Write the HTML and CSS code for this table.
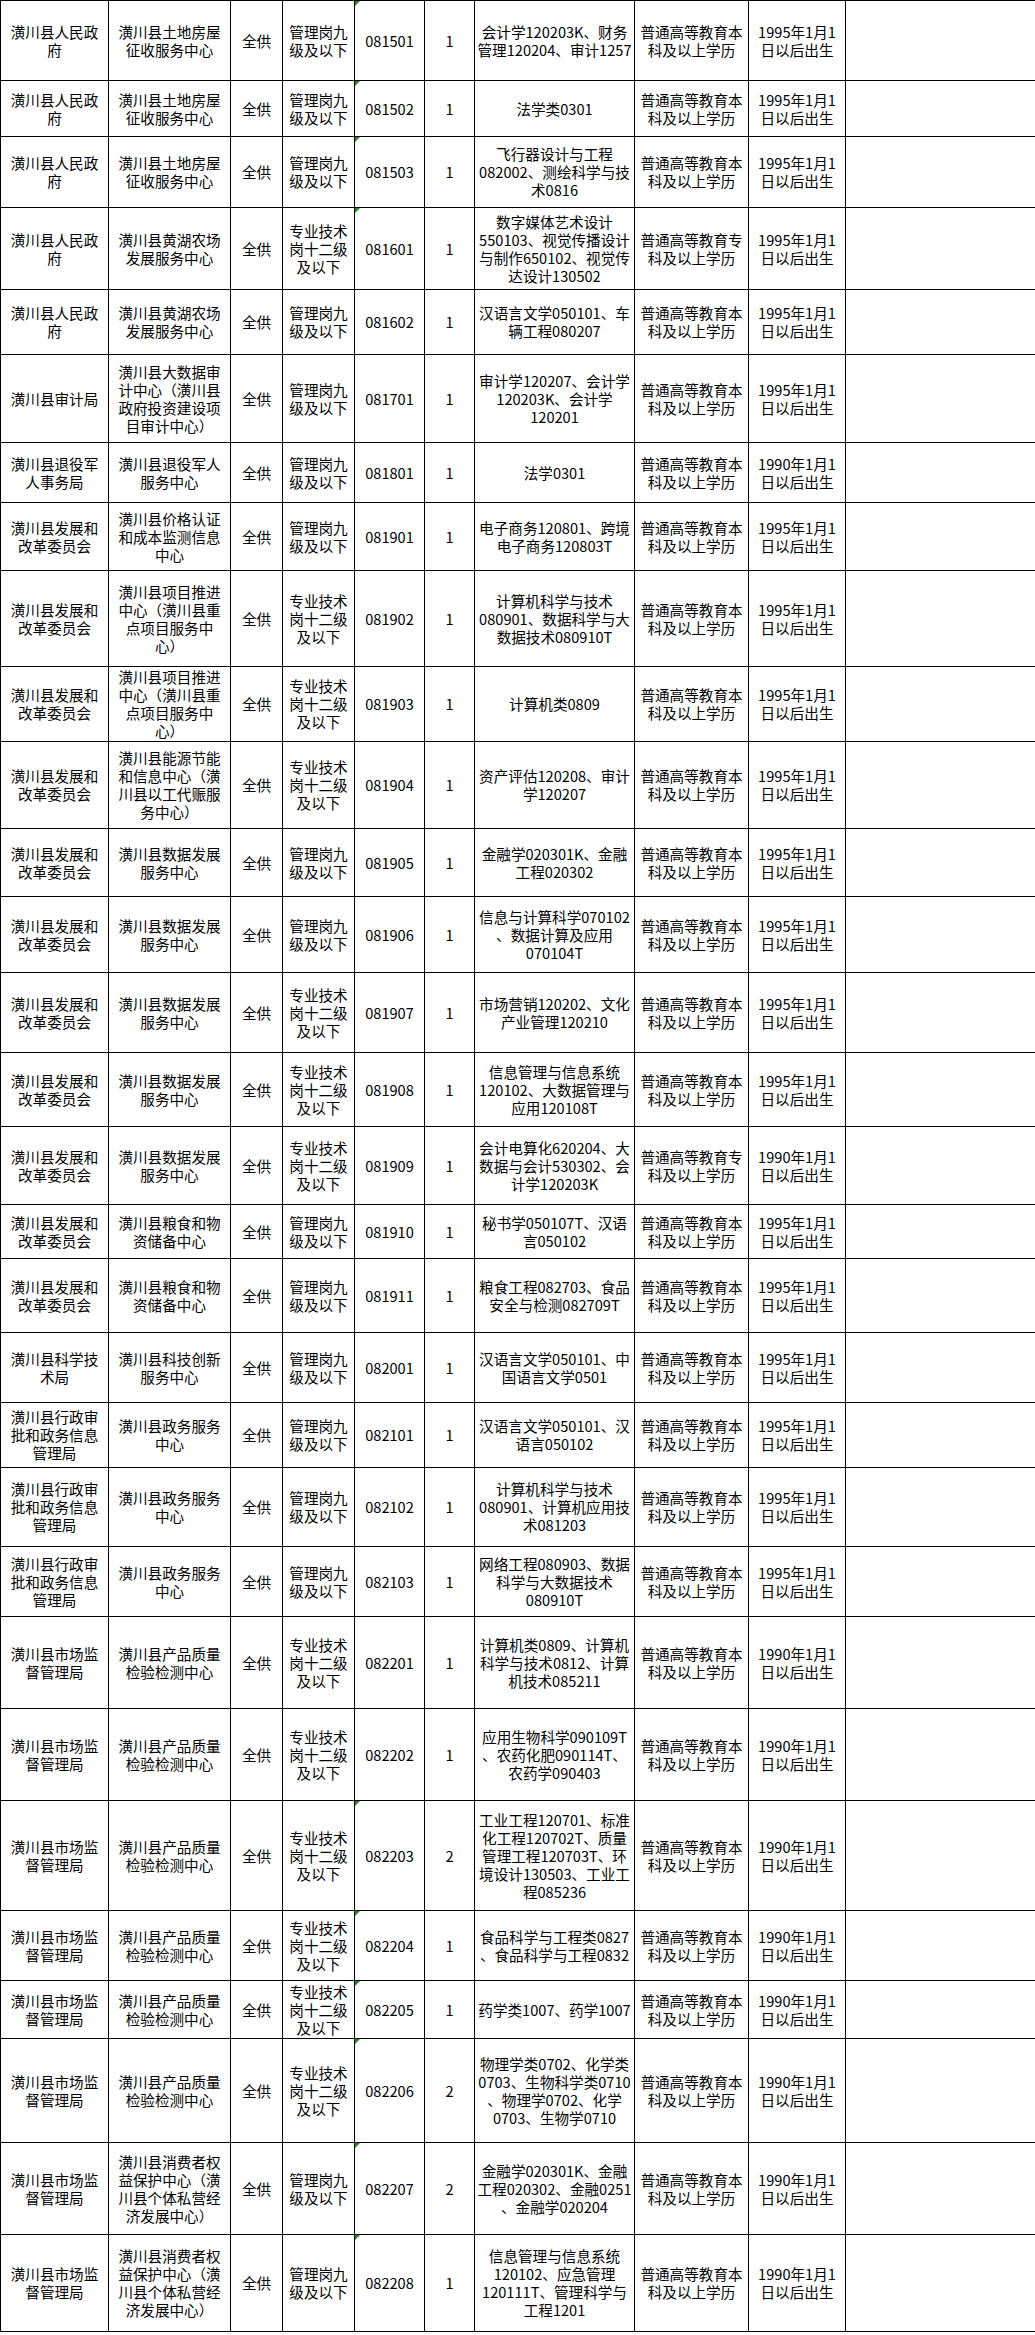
FILE: index.html
```html
<!DOCTYPE html>
<html lang="zh-CN">
<head>
<meta charset="utf-8">
<title>岗位表</title>
<link rel="stylesheet" href="styles.css">
</head>
<body>
<table class="sheet">
<colgroup>
<col class="c-dept"><col class="c-unit"><col class="c-fund"><col class="c-post"><col class="c-code"><col class="c-num"><col class="c-major"><col class="c-edu"><col class="c-age"><col class="c-note">
</colgroup>
<tbody>
<tr style="height:80px"><td>潢川县人民政<br>府</td><td>潢川县土地房屋<br>征收服务中心</td><td>全供</td><td>管理岗九<br>级及以下</td><td class="code flag">081501</td><td>1</td><td>会计学120203K、财务<br>管理120204、审计1257</td><td>普通高等教育本<br>科及以上学历</td><td>1995年1月1<br>日以后出生</td><td></td></tr>
<tr style="height:56px"><td>潢川县人民政<br>府</td><td>潢川县土地房屋<br>征收服务中心</td><td>全供</td><td>管理岗九<br>级及以下</td><td class="code flag">081502</td><td>1</td><td>法学类0301</td><td>普通高等教育本<br>科及以上学历</td><td>1995年1月1<br>日以后出生</td><td></td></tr>
<tr style="height:71px"><td>潢川县人民政<br>府</td><td>潢川县土地房屋<br>征收服务中心</td><td>全供</td><td>管理岗九<br>级及以下</td><td class="code flag">081503</td><td>1</td><td>飞行器设计与工程<br>082002、测绘科学与技<br>术0816</td><td>普通高等教育本<br>科及以上学历</td><td>1995年1月1<br>日以后出生</td><td></td></tr>
<tr style="height:82px"><td>潢川县人民政<br>府</td><td>潢川县黄湖农场<br>发展服务中心</td><td>全供</td><td>专业技术<br>岗十二级<br>及以下</td><td class="code flag">081601</td><td>1</td><td>数字媒体艺术设计<br>550103、视觉传播设计<br>与制作650102、视觉传<br>达设计130502</td><td>普通高等教育专<br>科及以上学历</td><td>1995年1月1<br>日以后出生</td><td></td></tr>
<tr style="height:65px"><td>潢川县人民政<br>府</td><td>潢川县黄湖农场<br>发展服务中心</td><td>全供</td><td>管理岗九<br>级及以下</td><td class="code">081602</td><td>1</td><td>汉语言文学050101、车<br>辆工程080207</td><td>普通高等教育本<br>科及以上学历</td><td>1995年1月1<br>日以后出生</td><td></td></tr>
<tr style="height:88px"><td>潢川县审计局</td><td>潢川县大数据审<br>计中心（潢川县<br>政府投资建设项<br>目审计中心）</td><td>全供</td><td>管理岗九<br>级及以下</td><td class="code">081701</td><td>1</td><td>审计学120207、会计学<br>120203K、会计学<br>120201</td><td>普通高等教育本<br>科及以上学历</td><td>1995年1月1<br>日以后出生</td><td></td></tr>
<tr style="height:60px"><td>潢川县退役军<br>人事务局</td><td>潢川县退役军人<br>服务中心</td><td>全供</td><td>管理岗九<br>级及以下</td><td class="code">081801</td><td>1</td><td>法学0301</td><td>普通高等教育本<br>科及以上学历</td><td>1990年1月1<br>日以后出生</td><td></td></tr>
<tr style="height:68px"><td>潢川县发展和<br>改革委员会</td><td>潢川县价格认证<br>和成本监测信息<br>中心</td><td>全供</td><td>管理岗九<br>级及以下</td><td class="code">081901</td><td>1</td><td>电子商务120801、跨境<br>电子商务120803T</td><td>普通高等教育本<br>科及以上学历</td><td>1995年1月1<br>日以后出生</td><td></td></tr>
<tr style="height:96px"><td>潢川县发展和<br>改革委员会</td><td>潢川县项目推进<br>中心（潢川县重<br>点项目服务中<br>心）</td><td>全供</td><td>专业技术<br>岗十二级<br>及以下</td><td class="code">081902</td><td>1</td><td>计算机科学与技术<br>080901、数据科学与大<br>数据技术080910T</td><td>普通高等教育本<br>科及以上学历</td><td>1995年1月1<br>日以后出生</td><td></td></tr>
<tr style="height:75px"><td>潢川县发展和<br>改革委员会</td><td>潢川县项目推进<br>中心（潢川县重<br>点项目服务中<br>心）</td><td>全供</td><td>专业技术<br>岗十二级<br>及以下</td><td class="code">081903</td><td>1</td><td>计算机类0809</td><td>普通高等教育本<br>科及以上学历</td><td>1995年1月1<br>日以后出生</td><td></td></tr>
<tr style="height:87px"><td>潢川县发展和<br>改革委员会</td><td>潢川县能源节能<br>和信息中心（潢<br>川县以工代赈服<br>务中心）</td><td>全供</td><td>专业技术<br>岗十二级<br>及以下</td><td class="code">081904</td><td>1</td><td>资产评估120208、审计<br>学120207</td><td>普通高等教育本<br>科及以上学历</td><td>1995年1月1<br>日以后出生</td><td></td></tr>
<tr style="height:68px"><td>潢川县发展和<br>改革委员会</td><td>潢川县数据发展<br>服务中心</td><td>全供</td><td>管理岗九<br>级及以下</td><td class="code">081905</td><td>1</td><td>金融学020301K、金融<br>工程020302</td><td>普通高等教育本<br>科及以上学历</td><td>1995年1月1<br>日以后出生</td><td></td></tr>
<tr style="height:76px"><td>潢川县发展和<br>改革委员会</td><td>潢川县数据发展<br>服务中心</td><td>全供</td><td>管理岗九<br>级及以下</td><td class="code">081906</td><td>1</td><td>信息与计算科学070102<br>、数据计算及应用<br>070104T</td><td>普通高等教育本<br>科及以上学历</td><td>1995年1月1<br>日以后出生</td><td></td></tr>
<tr style="height:80px"><td>潢川县发展和<br>改革委员会</td><td>潢川县数据发展<br>服务中心</td><td>全供</td><td>专业技术<br>岗十二级<br>及以下</td><td class="code">081907</td><td>1</td><td>市场营销120202、文化<br>产业管理120210</td><td>普通高等教育本<br>科及以上学历</td><td>1995年1月1<br>日以后出生</td><td></td></tr>
<tr style="height:74px"><td>潢川县发展和<br>改革委员会</td><td>潢川县数据发展<br>服务中心</td><td>全供</td><td>专业技术<br>岗十二级<br>及以下</td><td class="code">081908</td><td>1</td><td>信息管理与信息系统<br>120102、大数据管理与<br>应用120108T</td><td>普通高等教育本<br>科及以上学历</td><td>1995年1月1<br>日以后出生</td><td></td></tr>
<tr style="height:78px"><td>潢川县发展和<br>改革委员会</td><td>潢川县数据发展<br>服务中心</td><td>全供</td><td>专业技术<br>岗十二级<br>及以下</td><td class="code">081909</td><td>1</td><td>会计电算化620204、大<br>数据与会计530302、会<br>计学120203K</td><td>普通高等教育专<br>科及以上学历</td><td>1990年1月1<br>日以后出生</td><td></td></tr>
<tr style="height:54px"><td>潢川县发展和<br>改革委员会</td><td>潢川县粮食和物<br>资储备中心</td><td>全供</td><td>管理岗九<br>级及以下</td><td class="code">081910</td><td>1</td><td>秘书学050107T、汉语<br>言050102</td><td>普通高等教育本<br>科及以上学历</td><td>1995年1月1<br>日以后出生</td><td></td></tr>
<tr style="height:74px"><td>潢川县发展和<br>改革委员会</td><td>潢川县粮食和物<br>资储备中心</td><td>全供</td><td>管理岗九<br>级及以下</td><td class="code">081911</td><td>1</td><td>粮食工程082703、食品<br>安全与检测082709T</td><td>普通高等教育本<br>科及以上学历</td><td>1995年1月1<br>日以后出生</td><td></td></tr>
<tr style="height:70px"><td>潢川县科学技<br>术局</td><td>潢川县科技创新<br>服务中心</td><td>全供</td><td>管理岗九<br>级及以下</td><td class="code">082001</td><td>1</td><td>汉语言文学050101、中<br>国语言文学0501</td><td>普通高等教育本<br>科及以上学历</td><td>1995年1月1<br>日以后出生</td><td></td></tr>
<tr style="height:65px"><td>潢川县行政审<br>批和政务信息<br>管理局</td><td>潢川县政务服务<br>中心</td><td>全供</td><td>管理岗九<br>级及以下</td><td class="code">082101</td><td>1</td><td>汉语言文学050101、汉<br>语言050102</td><td>普通高等教育本<br>科及以上学历</td><td>1995年1月1<br>日以后出生</td><td></td></tr>
<tr style="height:79px"><td>潢川县行政审<br>批和政务信息<br>管理局</td><td>潢川县政务服务<br>中心</td><td>全供</td><td>管理岗九<br>级及以下</td><td class="code">082102</td><td>1</td><td>计算机科学与技术<br>080901、计算机应用技<br>术081203</td><td>普通高等教育本<br>科及以上学历</td><td>1995年1月1<br>日以后出生</td><td></td></tr>
<tr style="height:70px"><td>潢川县行政审<br>批和政务信息<br>管理局</td><td>潢川县政务服务<br>中心</td><td>全供</td><td>管理岗九<br>级及以下</td><td class="code">082103</td><td>1</td><td>网络工程080903、数据<br>科学与大数据技术<br>080910T</td><td>普通高等教育本<br>科及以上学历</td><td>1995年1月1<br>日以后出生</td><td></td></tr>
<tr style="height:92px"><td>潢川县市场监<br>督管理局</td><td>潢川县产品质量<br>检验检测中心</td><td>全供</td><td>专业技术<br>岗十二级<br>及以下</td><td class="code">082201</td><td>1</td><td>计算机类0809、计算机<br>科学与技术0812、计算<br>机技术085211</td><td>普通高等教育本<br>科及以上学历</td><td>1990年1月1<br>日以后出生</td><td></td></tr>
<tr style="height:92px"><td>潢川县市场监<br>督管理局</td><td>潢川县产品质量<br>检验检测中心</td><td>全供</td><td>专业技术<br>岗十二级<br>及以下</td><td class="code">082202</td><td>1</td><td>应用生物科学090109T<br>、农药化肥090114T、<br>农药学090403</td><td>普通高等教育本<br>科及以上学历</td><td>1990年1月1<br>日以后出生</td><td></td></tr>
<tr style="height:110px"><td>潢川县市场监<br>督管理局</td><td>潢川县产品质量<br>检验检测中心</td><td>全供</td><td>专业技术<br>岗十二级<br>及以下</td><td class="code flag">082203</td><td>2</td><td>工业工程120701、标准<br>化工程120702T、质量<br>管理工程120703T、环<br>境设计130503、工业工<br>程085236</td><td>普通高等教育本<br>科及以上学历</td><td>1990年1月1<br>日以后出生</td><td></td></tr>
<tr style="height:70px"><td>潢川县市场监<br>督管理局</td><td>潢川县产品质量<br>检验检测中心</td><td>全供</td><td>专业技术<br>岗十二级<br>及以下</td><td class="code flag">082204</td><td>1</td><td>食品科学与工程类0827<br>、食品科学与工程0832</td><td>普通高等教育本<br>科及以上学历</td><td>1990年1月1<br>日以后出生</td><td></td></tr>
<tr style="height:58px"><td>潢川县市场监<br>督管理局</td><td>潢川县产品质量<br>检验检测中心</td><td>全供</td><td>专业技术<br>岗十二级<br>及以下</td><td class="code flag">082205</td><td>1</td><td>药学类1007、药学1007</td><td>普通高等教育本<br>科及以上学历</td><td>1990年1月1<br>日以后出生</td><td></td></tr>
<tr style="height:104px"><td>潢川县市场监<br>督管理局</td><td>潢川县产品质量<br>检验检测中心</td><td>全供</td><td>专业技术<br>岗十二级<br>及以下</td><td class="code flag">082206</td><td>2</td><td>物理学类0702、化学类<br>0703、生物科学类0710<br>、物理学0702、化学<br>0703、生物学0710</td><td>普通高等教育本<br>科及以上学历</td><td>1990年1月1<br>日以后出生</td><td></td></tr>
<tr style="height:92px"><td>潢川县市场监<br>督管理局</td><td>潢川县消费者权<br>益保护中心（潢<br>川县个体私营经<br>济发展中心）</td><td>全供</td><td>管理岗九<br>级及以下</td><td class="code flag">082207</td><td>2</td><td>金融学020301K、金融<br>工程020302、金融0251<br>、金融学020204</td><td>普通高等教育本<br>科及以上学历</td><td>1990年1月1<br>日以后出生</td><td></td></tr>
<tr style="height:97px"><td>潢川县市场监<br>督管理局</td><td>潢川县消费者权<br>益保护中心（潢<br>川县个体私营经<br>济发展中心）</td><td>全供</td><td>管理岗九<br>级及以下</td><td class="code flag">082208</td><td>1</td><td>信息管理与信息系统<br>120102、应急管理<br>120111T、管理科学与<br>工程1201</td><td>普通高等教育本<br>科及以上学历</td><td>1990年1月1<br>日以后出生</td><td></td></tr>
</tbody>
</table>
</body>
</html>
```

FILE: styles.css
```css
html, body {
  margin: 0;
  padding: 0;
  background: #ffffff;
}

body {
  font-family: "Noto Sans CJK SC", "Noto Sans", sans-serif;
  font-size: 14.6px;
  line-height: 18px;
  color: #000000;
}

.sheet {
  border-collapse: collapse;
  table-layout: fixed;
  width: 1035px;
}

.c-dept { width: 108px; }
.c-unit { width: 122px; }
.c-fund { width: 52px; }
.c-post { width: 72px; }
.c-code { width: 70px; }
.c-num { width: 50px; }
.c-major { width: 160px; }
.c-edu { width: 114px; }
.c-age { width: 97px; }
.c-note { width: 190px; }

.sheet td {
  border: 1px solid #000000;
  padding: 0 1px;
  text-align: center;
  vertical-align: middle;
  white-space: nowrap;
  overflow: visible;
}

.sheet td.code {
  position: relative;
}

.sheet td.flag::before {
  content: "";
  position: absolute;
  left: 0;
  top: 0;
  width: 0;
  height: 0;
  border-top: 5px solid #1f8a1f;
  border-right: 5px solid transparent;
}
```
